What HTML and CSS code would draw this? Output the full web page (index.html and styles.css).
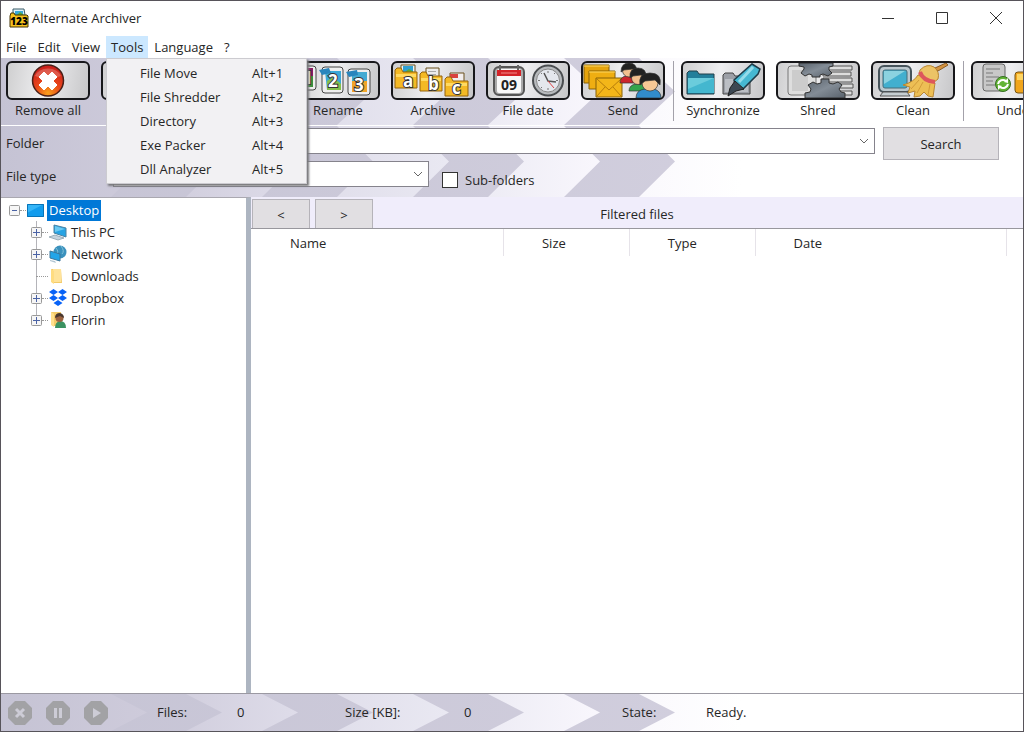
FILE: index.html
```html
<!DOCTYPE html>
<html lang="en">
<head>
<meta charset="utf-8">
<title>Alternate Archiver</title>
<link rel="stylesheet" href="styles.css">
</head>
<body>
<div class="window">
  <header class="titlebar">
    <svg class="app-icon" width="20" height="20" viewBox="0 0 20 20">
      <path d="M4 7V1h11l1 6" fill="#dff3fb" stroke="#3a5a66"/>
      <path d="M6 3h8v4H6z" fill="#39a9d8"/><path d="M8 7l3-3 4 3z" fill="#58a93a"/>
      <path d="M1 8l1-3h3l1 2h12l1 1v11H1z" fill="#f6c21c" stroke="#443406"/>
      <text class="app-digits" x="10" y="17" text-anchor="middle">123</text>
    </svg>
    <h1 class="title">Alternate Archiver</h1>
    <div class="window-controls">
      <button class="window-button" aria-label="Minimize"><svg width="14" height="14" viewBox="0 0 14 14"><path d="M1 7.500h12"/></svg></button>
      <button class="window-button" aria-label="Maximize"><svg width="14" height="14" viewBox="0 0 14 14"><path d="M1.500 1.500h11v11h-11z"/></svg></button>
      <button class="window-button" aria-label="Close"><svg width="14" height="14" viewBox="0 0 14 14"><path d="M1 1l12 12M13 1L1 13"/></svg></button>
    </div>
  </header>

  <nav class="menubar">
    <button class="menu-title">File</button>
    <button class="menu-title">Edit</button>
    <button class="menu-title">View</button>
    <div class="menu-anchor">
      <button class="menu-title menu-title-open">Tools</button>
      <div class="menu" role="menu">
        <button class="menu-item" role="menuitem"><span>File Move</span><span class="shortcut">Alt+1</span></button>
        <button class="menu-item" role="menuitem"><span>File Shredder</span><span class="shortcut">Alt+2</span></button>
        <button class="menu-item" role="menuitem"><span>Directory</span><span class="shortcut">Alt+3</span></button>
        <button class="menu-item" role="menuitem"><span>Exe Packer</span><span class="shortcut">Alt+4</span></button>
        <button class="menu-item" role="menuitem"><span>Dll Analyzer</span><span class="shortcut">Alt+5</span></button>
      </div>
    </div>
    <button class="menu-title">Language</button>
    <button class="menu-title">?</button>
  </nav>

  <div class="toolbar chevrons">
    <div class="tool-group">
      <button class="tool">
        <span class="tool-frame"><svg width="80" height="35" viewBox="0 0 80 35">
          <defs><radialGradient id="red" cx=".5" cy=".9" r=".9"><stop offset="0" stop-color="#f8a01c"/><stop offset=".45" stop-color="#e8451a"/><stop offset="1" stop-color="#c81c1c"/></radialGradient></defs>
          <circle cx="40" cy="17.500" r="15.500" fill="url(#red)" stroke="#4a2018" stroke-width="1.500"/>
          <path d="M27 13a14 12 0 0 1 26 0q-13 5-26 0z" fill="#fff" opacity=".22"/>
          <path d="M36 9l4 4 4-4 5 5-4 4 4 4-5 5-4-4-4 4-5-5 4-4-4-4z" fill="#fff" stroke="#fff" stroke-linejoin="round"/>
        </svg></span>
        <span class="tool-label">Remove all</span>
      </button>
      <span class="tool"><span class="tool-frame"></span></span>
    </div>
    <div class="tool-group">
      <span class="tool"><span class="tool-frame"></span></span>
      <button class="tool">
        <span class="tool-frame"><svg width="80" height="35" viewBox="0 0 80 35">
          <g stroke="#444"><rect x="-3" y="3" width="21" height="24" rx="3" fill="#eee"/><rect x="24" y="4" width="21" height="26" rx="3" fill="#eee"/><rect x="50" y="6" width="22" height="26" rx="3" fill="#eee"/></g>
          <path d="M0 5h15v8H0z" fill="#8b1d62"/><path d="M0 13h15v11H0z" fill="#3f8f3c"/>
          <path d="M27 8h16v19H29z" fill="#3ba8d7"/><path d="M29 18l6-4 8 7v6H29z" fill="#85bf4c"/><path d="M21 7l10-2 2 5-9 2z" fill="#2985bd"/>
          <path d="M54 9h15v10H54z" fill="#43aad2"/><path d="M54 18h15v11H54z" fill="#f1a529"/><path d="M48 9l11-2 1 5-9 2z" fill="#2985bd"/>
          <g class="icon-char"><text x="5" y="21">1</text><text x="30" y="24">2</text><text x="56" y="28">3</text></g>
        </svg></span>
        <span class="tool-label">Rename</span>
      </button>
      <button class="tool">
        <span class="tool-frame"><svg width="80" height="35" viewBox="0 0 80 35">
          <g stroke="#6b511c"><path d="M8 2h14v12H8z" fill="#e9f5f8"/><path d="M33 5h13v11H33z" fill="#ececec"/><path d="M57 10h14v10H57z" fill="#f2eeee"/></g>
          <path d="M10 3h10v6H10z" fill="#2fa0d2"/><path d="M12 9l4-3 5 3z" fill="#58a93a"/><path d="M57 11h8v4h-8z" fill="#d9423e"/><path d="M35 8h8v1h-8zm0 3h8v1h-8z" fill="#aaa"/>
          <g fill="#f4b925" stroke="#94620d"><path d="M2 25V7l2-2h4l2 4h14v16z"/><path d="M27 28V11l2-2h4l2 4h14v15z"/><path d="M52 33V16l2-2h4l2 4h15v15z"/></g>
          <g fill="#ffda62"><path d="M3 11h20v3H3zM28 15h20v3H28zM53 20h21v3H53z"/></g>
          <g class="icon-char"><text x="10" y="24">a</text><text x="35" y="27">b</text><text x="59" y="31">c</text></g>
        </svg></span>
        <span class="tool-label">Archive</span>
      </button>
      <button class="tool">
        <span class="tool-frame"><svg width="80" height="35" viewBox="0 0 80 35">
          <rect x="6" y="4" width="30" height="28" rx="5" fill="#aaa" stroke="#555" stroke-width="2"/>
          <rect x="9" y="6" width="24" height="24" rx="2" fill="#f8f8f8"/><path d="M9 7h24v6H9z" fill="#d32328"/>
          <path d="M12 2v5M30 2v5" stroke="#666" stroke-width="2"/><path d="M13 10h16" stroke="#f28b88"/>
          <text class="date-digits" x="21" y="27" text-anchor="middle">09</text>
          <circle cx="60" cy="17.500" r="15" fill="#b7babd" stroke="#4a4d50" stroke-width="2"/><circle cx="60" cy="17.500" r="11.500" fill="#e4e7ed" stroke="#888"/>
          <path d="M60 8v2M60 25v2M50 17.500h2M68 17.500h2M53 10l1 1M67 10l-1 1M53 25l1-1" stroke="#777"/>
          <path d="M56 10l4 8 8 1" fill="none" stroke="#555" stroke-width="1.500"/><path d="M60 18l6 7" stroke="#d44"/>
        </svg></span>
        <span class="tool-label">File date</span>
      </button>
      <button class="tool">
        <span class="tool-frame"><svg width="80" height="35" viewBox="0 0 80 35">
          <g stroke="#866008"><path d="M1 2h25v18H1z" fill="#e5a30c"/><path d="M6 8h26v18H6z" fill="#efae12"/><path d="M13 15h26v19H13z" fill="#f3b619"/></g>
          <path d="M1 3h25M6 9h26" stroke="#ffd760"/><path d="M14 16l12 11 12-11M14 33l8-9M38 33l-8-9" fill="none" stroke="#b47c0c"/>
          <g stroke="#333" stroke-width=".7">
            <path d="M37 20q0-6 6-7h6q5 2 5 7z" fill="#cc252c"/><circle cx="46" cy="7.500" r="6.500" fill="#f2c08e"/><path d="M38 9q0-9 8-9t8 9l-4-3-9 1z" fill="#222"/>
            <path d="M46 28q0-6 7-7h7q5 2 5 7z" fill="#34a44c"/><circle cx="55" cy="15" r="6.500" fill="#f2c08e"/><path d="M47 15q-1-10 8-10t8 10l-5-3-8 1z" fill="#222"/>
            <path d="M53 35q0-8 9-9h9q7 2 7 9z" fill="#318ccb"/><circle cx="67" cy="20" r="8" fill="#f6c895"/><path d="M57 22q-2-12 10-12 12 0 10 12l-5-5-10 1z" fill="#222"/>
          </g>
        </svg></span>
        <span class="tool-label">Send</span>
      </button>
    </div>
    <div class="tool-group">
      <button class="tool">
        <span class="tool-frame"><svg width="80" height="35" viewBox="0 0 80 35">
          <path d="M4 31V10l2-2h8l2 3h15v20z" fill="#237f9b" stroke="#23404b"/><path d="M5 15h26v15H5z" fill="#44b7cf"/><path d="M5 15h26L5 26z" fill="#6accdc"/>
          <path d="M40 31V12l2-2h8l2 3h15v18z" fill="#9c9fa6" stroke="#444"/><path d="M42 16h23v13H42z" fill="#bbbec4"/>
          <path d="M69 1l8 5-2 5-15 15-8-4-1-5z" fill="#46b8d2" stroke="#1e3c49" stroke-width="1.500"/><path d="M70 4L56 19" stroke="#94dcea" stroke-width="3"/><path d="M52 18l9 8-8 2-8 5 2-8z" fill="#3c4853" stroke="#222"/>
        </svg></span>
        <span class="tool-label">Synchronize</span>
      </button>
      <button class="tool">
        <span class="tool-frame"><svg width="80" height="35" viewBox="0 0 80 35">
          <defs><linearGradient id="steel" x1="0" y1="0" x2="1" y2="1"><stop offset="0" stop-color="#59626c"/><stop offset=".5" stop-color="#838c96"/><stop offset="1" stop-color="#59626c"/></linearGradient></defs>
          <rect x="10" y="3" width="28" height="29" rx="3" fill="#dedede" stroke="#777"/><path d="M14 7h16v21H14z" fill="#ccc"/>
          <g fill="#ddd" stroke="#555"><path d="M45 3h29v4H45zM45 9h28v4H45zM45 15h29v4H45zM45 21h30v4H45zM45 28h29v4H45z"/></g>
          <path d="M21 0h34v3l-4 1v3l3 3-4 3-5-2-3 1v2h-8v-2l-3-1-4 2-4-3 3-4v-2l-5-1z" fill="url(#steel)" stroke="#333"/>
          <path d="M27 35v-5l5-1 1-3-3-4 5-3 4 2 4-1v-4h8v4l4 1 5-2 4 3-3 4 2 3 4 1v5z" fill="url(#steel)" stroke="#333"/>
        </svg></span>
        <span class="tool-label">Shred</span>
      </button>
      <button class="tool">
        <span class="tool-frame"><svg width="80" height="35" viewBox="0 0 80 35">
          <rect x="6" y="3" width="32" height="26" rx="5" fill="#bcc8ce" stroke="#46535a" stroke-width="2"/><rect x="10" y="7" width="24" height="18" rx="2" fill="#42afcf" stroke="#476c79"/><path d="M11 8h21L11 21z" fill="#8bd2e0"/><path d="M10 29h24l3 4H7z" fill="#c5cdd1" stroke="#555"/>
          <path d="M62 5l11-5 2 2-10 6z" fill="#d39341" stroke="#8a5a24"/>
          <path d="M47 7q7-7 14-3 6 5 4 12l-5 4-14-8z" fill="#ecc366" stroke="#b88633"/>
          <path d="M45 12l17 8-2 14-5-1-4-4-4 4-6 1 1-6-7 2 2-6-7-2q11-3 15-10z" fill="#edbf55" stroke="#b88633"/><path d="M47 9q3 9 15 10" fill="none" stroke="#dd575c" stroke-width="4"/><path d="M46 17l-8 9M50 19l-6 11M57 21l-2 11" stroke="#d29c3b"/>
        </svg></span>
        <span class="tool-label">Clean</span>
      </button>
    </div>
    <div class="tool-group">
      <button class="tool">
        <span class="tool-frame"><svg width="80" height="35" viewBox="0 0 80 35">
          <rect x="10" y="1" width="22" height="27" rx="3" fill="#c8c8c8" stroke="#666"/><path d="M13 6h14M13 10h7M13 14h13M13 18h7M13 22h9" stroke="#a0a0a0" stroke-width="2"/>
          <circle cx="30" cy="21" r="7.500" fill="#62b435" stroke="#346f20"/><path d="M25 21a5 5 0 0 1 8-3M35 21a5 5 0 0 1-8 3" fill="none" stroke="#fff" stroke-width="2"/><path d="M31 19l4 1V15zM29 23l-4-1v5z" fill="#fff"/>
          <rect x="42" y="9" width="22" height="21" rx="3" fill="#f1a51c" stroke="#775514"/><path d="M44 11h18v6H44z" fill="#ffd562"/>
        </svg></span>
        <span class="tool-label">Undo</span>
      </button>
    </div>
  </div>

  <form class="search-panel chevrons">
    <label for="folder">Folder</label>
    <select id="folder" class="combo"><option></option></select>
    <button class="push search-button" type="button">Search</button>
    <label for="file-type">File type</label>
    <div class="type-row">
      <select id="file-type" class="combo type-combo"><option></option></select>
      <label class="check-label"><input class="check" type="checkbox">Sub-folders</label>
    </div>
  </form>

  <main class="content">
    <aside class="tree">
      <div class="tree-row root">
        <svg class="toggle" width="11" height="11" viewBox="0 0 11 11"><rect x=".5" y=".5" width="10" height="10" rx="1" fill="#f6f6f6" stroke="#999"/><path d="M3 5.500h5" stroke="#4b63a5"/></svg>
        <span class="dots"></span>
        <svg class="tree-icon" width="18" height="18" viewBox="0 0 18 18"><path d="M0 3h17v13H0z" fill="#129ced"/><path d="M0 3h17L0 12z" fill="#35b5f7"/><path d="M.5 3.500h16v12H.5z" fill="none" stroke="#0874b8"/></svg>
        <span class="tree-label selected">Desktop</span>
      </div>
      <div class="branch">
        <div class="tree-row">
          <svg class="toggle" width="11" height="11" viewBox="0 0 11 11"><rect x=".5" y=".5" width="10" height="10" rx="1" fill="#f6f6f6" stroke="#999"/><path d="M2 5.500h7M5.500 2v7" stroke="#4b63a5"/></svg>
          <span class="dots"></span>
          <svg class="tree-icon" width="18" height="18" viewBox="0 0 18 18"><path d="M5 2l12 3v9L5 10z" fill="#27a3e3" stroke="#4b82a2"/><path d="M6 3l10 3-10 3z" fill="#6bcaf2"/><path d="M0 14l6-2 9 3-6 2z" fill="#c5d3dd" stroke="#8397a5" stroke-width=".7"/></svg>
          <span class="tree-label">This PC</span>
        </div>
        <div class="tree-row">
          <svg class="toggle" width="11" height="11" viewBox="0 0 11 11"><rect x=".5" y=".5" width="10" height="10" rx="1" fill="#f6f6f6" stroke="#999"/><path d="M2 5.500h7M5.500 2v7" stroke="#4b63a5"/></svg>
          <span class="dots"></span>
          <svg class="tree-icon" width="18" height="18" viewBox="0 0 18 18"><circle cx="11" cy="7" r="6.500" fill="#3a91bd"/><path d="M7 3q3 4 1 5M12 1q4 5 1 8" stroke="#82c2da" fill="none"/><path d="M1 6l10 3v7L1 13z" fill="#23a5e8" stroke="#3d779b"/><path d="M1 15l5 1 1 2-6-2z" fill="#b1c5d2"/></svg>
          <span class="tree-label">Network</span>
        </div>
        <div class="tree-row">
          <span class="dots dots-long"></span>
          <svg class="tree-icon" width="18" height="18" viewBox="0 0 18 18"><path d="M2 2h10l1 14H3z" fill="#f3cb69"/><path d="M4 2h8v13H4z" fill="#ffe39a"/><path d="M2 2l3 2v13l-3-2z" fill="#ffdc80"/></svg>
          <span class="tree-label">Downloads</span>
        </div>
        <div class="tree-row">
          <svg class="toggle" width="11" height="11" viewBox="0 0 11 11"><rect x=".5" y=".5" width="10" height="10" rx="1" fill="#f6f6f6" stroke="#999"/><path d="M2 5.500h7M5.500 2v7" stroke="#4b63a5"/></svg>
          <span class="dots"></span>
          <svg class="tree-icon" width="18" height="18" viewBox="0 0 18 18" fill="#0862f7"><path d="M4.500 0L9 3 4.500 6 0 3zM13.500 0L18 3l-4.500 3L9 3zM4.500 6L9 9l-4.500 3L0 9zM13.500 6L18 9l-4.500 3L9 9zM9 11l4.500 3L9 17l-4.500-3z"/></svg>
          <span class="tree-label">Dropbox</span>
        </div>
        <div class="tree-row">
          <svg class="toggle" width="11" height="11" viewBox="0 0 11 11"><rect x=".5" y=".5" width="10" height="10" rx="1" fill="#f6f6f6" stroke="#999"/><path d="M2 5.500h7M5.500 2v7" stroke="#4b63a5"/></svg>
          <span class="dots"></span>
          <svg class="tree-icon" width="18" height="18" viewBox="0 0 18 18"><path d="M2 1h10l1 14H3z" fill="#f3cb69"/><path d="M2 1l3 2v13l-3-2z" fill="#ffe08d"/><path d="M6 17q0-6 5-7 6 0 6 7z" fill="#3b9261"/><circle cx="10.500" cy="7" r="4" fill="#9a623f"/><path d="M6 7q0-5 5-5 4 1 4 5l-4-2z" fill="#4a382f"/></svg>
          <span class="tree-label">Florin</span>
        </div>
      </div>
    </aside>

    <section class="files">
      <div class="files-head">
        <div class="nav-buttons">
          <button class="push nav-button">&lt;</button>
          <button class="push nav-button">&gt;</button>
        </div>
        <h2 class="files-title">Filtered files</h2>
      </div>
      <div class="table-area">
        <table class="file-table">
          <thead><tr><th class="col-wide">Name</th><th>Size</th><th>Type</th><th class="col-wide">Date</th></tr></thead>
        </table>
      </div>
    </section>
  </main>

  <footer class="statusbar chevrons">
    <div class="status-buttons">
      <button class="status-button" aria-label="Stop" disabled><svg width="24" height="24" viewBox="0 0 24 24"><path d="M7 0h10l7 7v10l-7 7H7l-7-7V7z" fill="#a2a2a5"/><path d="M8 8l8 8M16 8l-8 8" stroke="#cdccd6" stroke-width="3"/></svg></button>
      <button class="status-button" aria-label="Pause" disabled><svg width="24" height="24" viewBox="0 0 24 24"><path d="M7 0h10l7 7v10l-7 7H7l-7-7V7z" fill="#a2a2a5"/><path d="M9.500 7v10M14.500 7v10" stroke="#cdccd6" stroke-width="3"/></svg></button>
      <button class="status-button" aria-label="Start" disabled><svg width="24" height="24" viewBox="0 0 24 24"><path d="M7 0h10l7 7v10l-7 7H7l-7-7V7z" fill="#a2a2a5"/><path d="M9 7l8 5-8 5z" fill="#cdccd6"/></svg></button>
    </div>
    <dl class="stats">
      <div class="stat stat-files"><dt>Files:</dt><dd>0</dd></div>
      <div class="stat stat-size"><dt>Size [KB]:</dt><dd>0</dd></div>
      <div class="stat stat-state"><dt>State:</dt><dd>Ready.</dd></div>
    </dl>
  </footer>
</div>
</body>
</html>
```

FILE: styles.css
```css
* { box-sizing: border-box; }

body {
  margin: 0;
  font: 13px/20px "Open Sans", "Noto Sans", sans-serif;
  color: #262626;
  background: #fff;
}

button, select, input { font: inherit; color: inherit; margin: 0; }
button { padding: 0; border: 0; background: none; }
svg { display: block; flex: none; }
h1, h2, dl, dd { margin: 0; font: inherit; }

.window {
  display: flex;
  flex-direction: column;
  min-height: 100vh;
  border: 1px solid #57545a;
  overflow: hidden;
}

/* Arrow bands shared by the toolbar, search panel and status bar */
.chevrons {
  background: #fff url("data:image/svg+xml,%3Csvg xmlns='http://www.w3.org/2000/svg' viewBox='0 0 740 70' preserveAspectRatio='none'%3E%3Cdefs%3E%3ClinearGradient id='l' gradientUnits='userSpaceOnUse' x1='0' y1='0' x2='740' y2='0'%3E%3Cstop offset='0' stop-color='%23c5c3d4'/%3E%3Cstop offset='.2' stop-color='%23cecbdb'/%3E%3Cstop offset='.4' stop-color='%23dedce9'/%3E%3Cstop offset='.6' stop-color='%23e9e8f2'/%3E%3Cstop offset='.8' stop-color='%23f8f6fc'/%3E%3Cstop offset='1' stop-color='%23fff'/%3E%3C/linearGradient%3E%3ClinearGradient id='d' gradientUnits='userSpaceOnUse' x1='0' y1='0' x2='740' y2='0'%3E%3Cstop offset='0' stop-color='%23c5c3d4'/%3E%3Cstop offset='1' stop-color='%23d2cfde'/%3E%3C/linearGradient%3E%3C/defs%3E%3Cpath fill='url(%23l)' d='M0 0H740V70H0z'/%3E%3Cpath fill='url(%23d)' d='M110 0H185L221 35 185 70H110L146 35zM261 0H336L372 35 336 70H261L297 35zM412 0H487L523 35 487 70H412L448 35zM563 0H638L674 35 638 70H563L599 35z'/%3E%3C/svg%3E") 0 0 / 740px 100% no-repeat;
}

.titlebar { display: flex; align-items: center; height: 35px; padding: 0 0 2px 8px; }
.title { flex: 1; padding-left: 3px; }
.app-digits { font: 900 10px "Open Sans", sans-serif; }
.window-controls { display: flex; }
.window-button { display: grid; place-items: center; width: 54px; height: 32px; }
.window-button svg { fill: none; stroke: #333; }

.menubar { display: flex; gap: 1px; height: 22px; }
.menu-title { height: 22px; padding: 0 5px; }
.menu-title-open { background: #cce8ff; }
.menu-anchor { position: relative; }
.menu {
  position: absolute;
  top: 100%;
  left: 0;
  z-index: 2;
  width: 201px;
  padding: 2px 0;
  background: #f2f1f3;
  border: 1px solid #cccbd0;
  box-shadow: 2px 2px 2px #77777a;
}
.menu-item {
  display: flex;
  justify-content: space-between;
  width: 100%;
  padding: 2px 20px 2px 33px;
  text-align: left;
}
.shortcut { width: 34px; }

.toolbar { display: flex; align-items: flex-start; height: 67px; padding-top: 3px; padding-left: 5px; overflow: hidden; }
.tool-group { display: flex; flex: none; gap: 11px; }
.tool-group + .tool-group { margin-left: 8px; padding-left: 7px; border-left: 1px solid #a3a1aa; }
.tool { width: 84px; display: flex; flex-direction: column; align-items: center; }
.tool-frame {
  flex: none;
  width: 84px;
  height: 39px;
  overflow: hidden;
  border: 2px solid #17171a;
  border-radius: 6px;
  background: linear-gradient(100deg, #cfcfd0, #eeeef0 45%, #c7c7c9);
}
.icon-char { font: bold 17px "Open Sans", sans-serif; fill: #fff; stroke: #333; stroke-width: 2px; paint-order: stroke; }
.date-digits { font: bold 14px "Open Sans", sans-serif; fill: #222; }
.tool-label { line-height: 21px; }

.search-panel {
  display: grid;
  grid-template-columns: 99px 1fr 116px;
  column-gap: 8px;
  align-content: start;
  height: 72px;
  padding: 1px 24px 0 5px;
  border-top: 1px solid #fff;
}
.search-panel label { line-height: 32px; }
.combo {
  width: 100%;
  height: 26px;
  margin-top: 1px;
  border: 1px solid #85838c;
  border-radius: 0;
  appearance: none;
  background: #fff url("data:image/svg+xml,%3Csvg xmlns='http://www.w3.org/2000/svg' width='10' height='6'%3E%3Cpath d='M1 1l4 4 4-4' fill='none' stroke='%23666'/%3E%3C/svg%3E") right 5px center no-repeat;
}
.push { background: #e1dfe2; border: 1px solid #b5b3b9; }
.search-button { height: 33px; }
.type-row { display: flex; gap: 13px; }
.type-combo { width: 316px; }
.check-label { display: flex; align-items: center; gap: 7px; padding-top: 4px; }
.check { width: 16px; height: 16px; appearance: none; background: #fff; border: 1px solid #333; }

.content { display: flex; flex: 1; background: #fff; }
.tree { width: 250px; padding: 1px 0 0 8px; border-right: 5px solid #adb5c1; border-top: 1px solid #aaa8b0; }
.tree-row { display: flex; align-items: center; height: 22px; }
.dots { width: 6px; border-top: 1px dotted #999; }
.dots-long { width: 12px; margin-left: 5px; }
.tree-icon { margin-left: 1px; }
.tree-label { padding: 0 2px; margin-left: 2px; line-height: 21px; }
.selected { background: #0078d7; color: #fff; }
.branch {
  padding-left: 22px;
  background: linear-gradient(#b4b4b9, #b4b4b9) 27px 0 / 1px calc(100% - 11px) no-repeat;
}

.files { display: flex; flex: 1; flex-direction: column; }
.files-head {
  display: grid;
  grid-template-columns: 1fr auto 1fr;
  align-items: end;
  height: 32px;
  background: #f0edfb;
  border-bottom: 1px solid #98979d;
}
.nav-buttons { display: flex; gap: 5px; padding-left: 1px; }
.nav-button { width: 58px; height: 29px; padding-top: 2px; border-bottom: 0; }
.files-title { line-height: 28px; }
.table-area { flex: 1; padding: 0 16px 0 1px; }
.file-table { width: 100%; table-layout: fixed; border-collapse: collapse; }
.file-table th {
  height: 27px;
  padding: 0 0 0 38px;
  font-weight: normal;
  text-align: left;
  border-right: 1px solid #e6e3e9;
}
.file-table .col-wide { width: 33.333%; }

.statusbar { display: flex; align-items: center; height: 38px; border-top: 1px solid #9b99a2; }
.status-buttons { display: flex; gap: 14px; width: 156px; padding-left: 7px; }
.stats { display: flex; padding-bottom: 2px; }
.stat { display: flex; }
.stat-files { width: 188px; }
.stat-files dt { width: 80px; }
.stat-size { width: 277px; }
.stat-size dt { width: 119px; }
.stat-state dt { width: 84px; }
```
